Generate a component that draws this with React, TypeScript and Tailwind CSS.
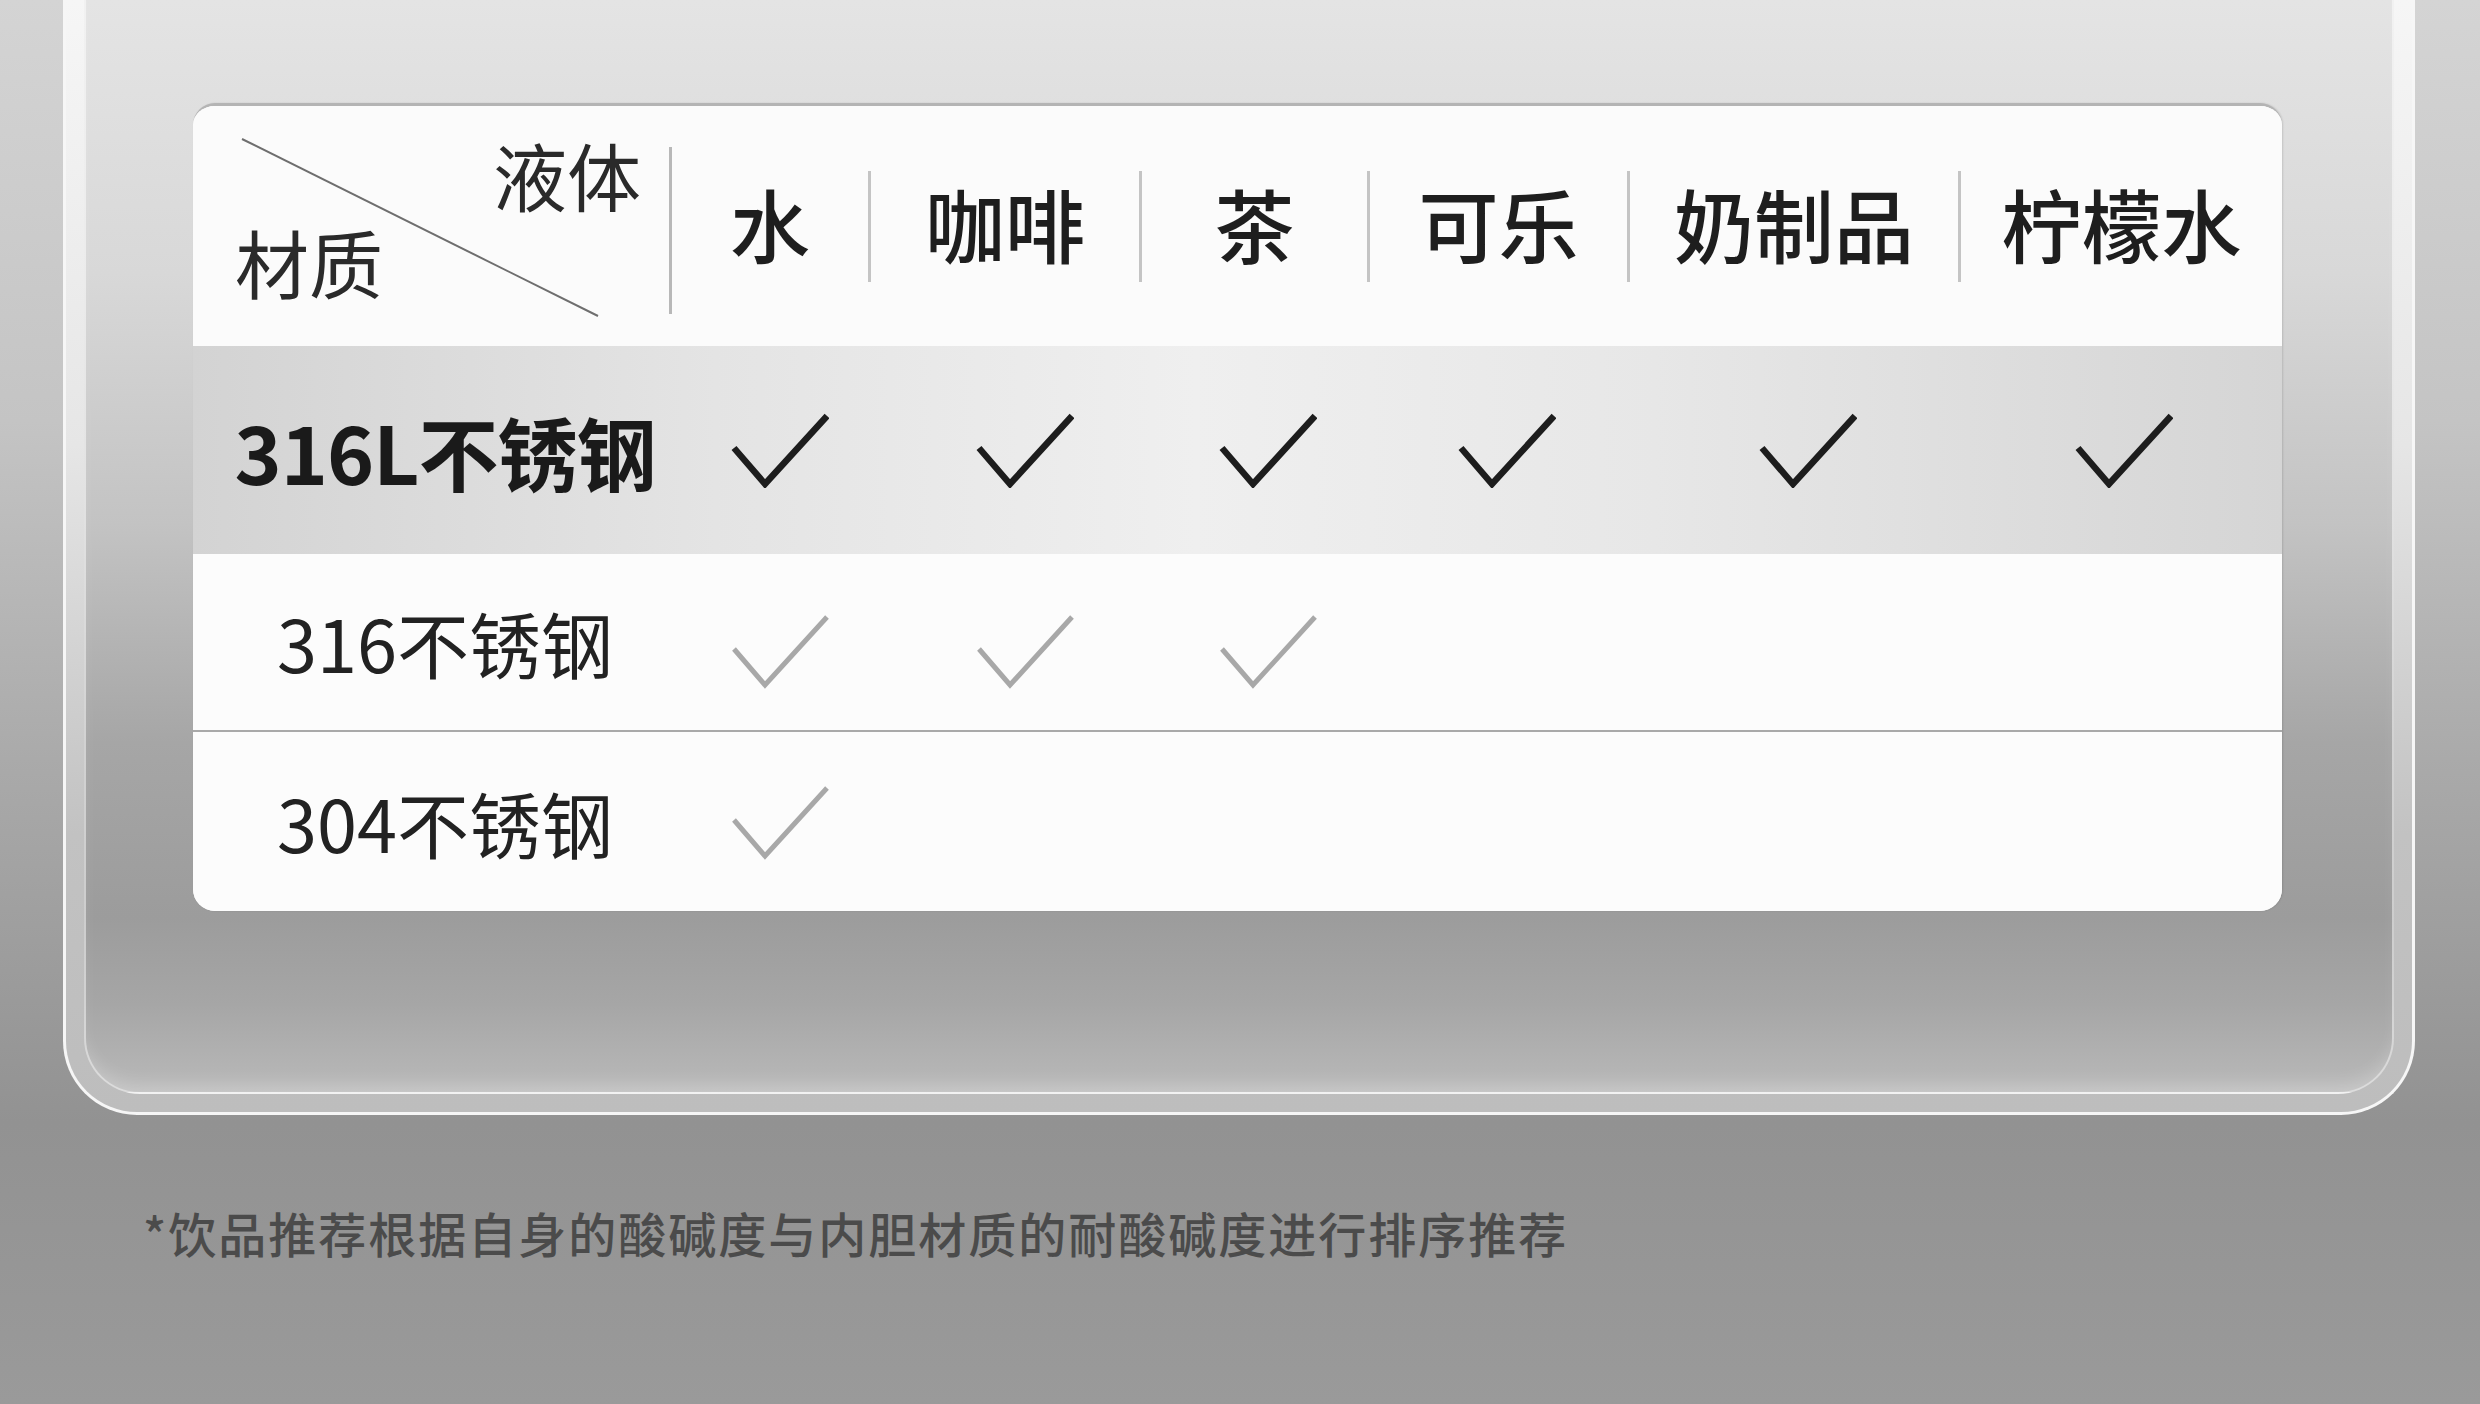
const liquids = ['水', '咖啡', '茶', '可乐', '奶制品', '柠檬水'];

// nudges so each tick lands where the picture has it
const tickPad = ['pl-[22px]', 'pl-[42px]', 'pl-[30px]', 'pl-[20px]', 'pl-[30px]', 'pl-[8px]'];

const rows = [
  { label: '316L不锈钢', count: 6, strong: true },
  { label: '316不锈钢', count: 3, strong: false },
  { label: '304不锈钢', count: 1, strong: false },
];

function Tick({ strong }: { strong: boolean }) {
  return (
    <svg width="98" height="76" viewBox="0 0 98 76" fill="none">
      <path
        d="M3 36 L34 72 L96 4"
        stroke={strong ? '#1d1d1d' : '#a8a8a8'}
        strokeWidth={strong ? 6.5 : 5}
        strokeLinecap="butt"
        strokeLinejoin="miter"
      />
    </svg>
  );
}

const grid = 'grid grid-cols-[476px_199px_271px_228px_260px_331px_324px]';

export default function App() {
  return (
    <div className="w-[2480px] h-[1404px] overflow-hidden bg-[linear-gradient(180deg,#d4d4d4_0%,#c4c4c4_30%,#a9a9a9_55%,#929292_80%,#9a9a9a_100%)] font-['Noto_Sans_CJK_SC',sans-serif]">
      {/* outer frame */}
      <div className="ml-[63px] w-[2352px] border-x-[3px] border-b-[3px] border-[#f6f6f6] rounded-b-[74px] px-[18px] pb-[18px] bg-[linear-gradient(180deg,#f6f6f6_0%,#e6e6e6_40%,#c2c2c2_75%,#bdbdbd_100%)]">
        <div className="border-x-2 border-b-2 border-white/50 rounded-b-[56px] pl-[107px] pt-[103px] pb-[181px] bg-[linear-gradient(180deg,#e4e4e4_0%,#d8d8d8_25%,#c3c3c3_48%,#a6a6a6_68%,#9c9c9c_84%,#a6a6a6_92%,#b9b9b9_100%)] shadow-[inset_0_-14px_18px_-8px_rgba(255,255,255,0.25)]">
          {/* table card */}
          <div className="w-[2089px] rounded-[22px] overflow-hidden bg-[#fcfcfc] border-t-[3px] border-t-[#b4b4b4] shadow-[1px_0_2px_rgba(0,0,0,0.12)]">
            {/* header */}
            <div className={`${grid} h-[240px] bg-[#fbfbfb] text-[#1e1e1e]`}>
              <div className="relative flex flex-col pt-[31px] gap-[13px]">
                <svg className="absolute inset-0" width="476" height="240" viewBox="0 0 476 240">
                  <line x1="49" y1="33" x2="405" y2="210" stroke="#6e6e6e" strokeWidth="2" />
                </svg>
                <span className="self-end pr-[28px] text-[74px] leading-none text-[#2a2a2a]">液体</span>
                <span className="pl-[42px] text-[74px] leading-none text-[#2a2a2a]">材质</span>
              </div>
              {liquids.map((name, i) => (
                <div key={name} className="flex items-center">
                  <span className={i === 0 ? 'w-[3px] h-[167px] mt-[8px] bg-[#b8b8b8]' : 'w-[3px] h-[111px] bg-[#c4c4c4]'} />
                  <span className="flex-1 text-center text-[80px] font-medium leading-none pb-[9px]">{name}</span>
                </div>
              ))}
            </div>

            {/* material rows */}
            {rows.map((r, ri) => (
              <div
                key={r.label}
                className={
                  ri === 0
                    ? `${grid} h-[208px] bg-[linear-gradient(90deg,#d3d3d3_0%,#e4e4e4_25%,#efefef_48%,#e7e7e7_70%,#d5d5d5_100%)]`
                    : ri === 1
                      ? `${grid} h-[178px] bg-[#fcfcfc] border-b-2 border-[#a9a9a9]`
                      : `${grid} h-[179px] bg-[#fcfcfc]`
                }
              >
                <div className="flex items-center justify-center pl-[28px]">
                  <span
                    className={
                      r.strong
                        ? 'text-[80px] font-bold leading-none text-[#1a1a1a] tracking-[-1px]'
                        : 'text-[72px] leading-none text-[#222222]'
                    }
                  >
                    {r.label}
                  </span>
                </div>
                {liquids.map((name, ci) => (
                  <div key={name} className={`flex items-center justify-center ${tickPad[ci]} ${ri === 1 ? 'pt-[18px]' : ''}`}>
                    {ci < r.count && <Tick strong={r.strong} />}
                  </div>
                ))}
              </div>
            ))}
          </div>
        </div>
      </div>

      <p className="ml-[143px] mt-[93px] text-[48px] tracking-[2px] leading-none font-medium text-[#4b4b4b]">
        *饮品推荐根据自身的酸碱度与内胆材质的耐酸碱度进行排序推荐
      </p>
    </div>
  );
}
